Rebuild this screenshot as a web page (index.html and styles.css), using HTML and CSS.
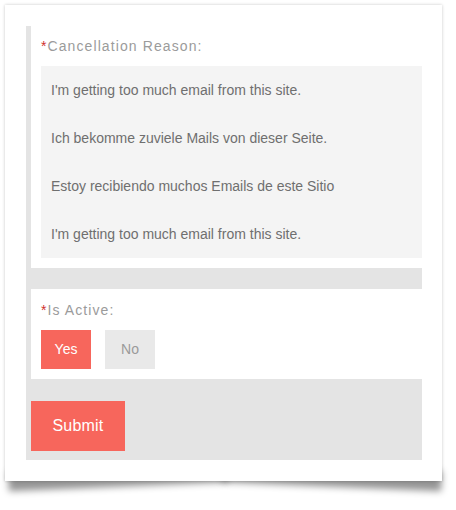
FILE: index.html
```html
<!DOCTYPE html>
<html>
<head>
<meta charset="utf-8">
<link rel="stylesheet" href="styles.css">
</head>
<body>
<div class="card">
  <div class="form">
    <div class="panel">
      <div class="label"><span class="req">*</span>Cancellation Reason:</div>
      <ul class="options">
        <li>I'm getting too much email from this site.</li>
        <li>Ich bekomme zuviele Mails von dieser Seite.</li>
        <li>Estoy recibiendo muchos Emails de este Sitio</li>
        <li>I'm getting too much email from this site.</li>
      </ul>
    </div>
    <div class="panel panel-active">
      <div class="label"><span class="req">*</span>Is Active:</div>
      <div class="toggle">
        <span class="btn btn-on">Yes</span>
        <span class="btn btn-off">No</span>
      </div>
    </div>
    <div class="actions">
      <span class="submit">Submit</span>
    </div>
  </div>
</div>
</body>
</html>
```

FILE: styles.css
```css
html {
  margin: 0;
  padding: 0;
  background: #ffffff;
}
body {
  margin: 0;
  padding: 0;
  font-family: "Liberation Sans", Arial, Helvetica, sans-serif;
  width: 456px;
  height: 510px;
  overflow: hidden;
}
.card {
  position: relative;
  margin: 5px 0 0 5px;
  width: 437px;
  height: 476px;
  box-sizing: border-box;
  padding: 21px 20px 0 21px;
  background: #ffffff;
  box-shadow: 0 0 3px rgba(0, 0, 0, 0.22);
}
.card::before,
.card::after {
  content: "";
  position: absolute;
  z-index: -1;
  bottom: 16px;
  width: 50%;
  height: 20px;
  box-shadow: 0 17px 7px rgba(0, 0, 0, 0.42);
}
.card::before {
  left: 3px;
  transform: rotate(-2.4deg);
  transform-origin: right bottom;
}
.card::after {
  right: 1px;
  transform: rotate(2.4deg);
  transform-origin: left bottom;
}
.form {
  display: flex;
  flex-direction: column;
  gap: 21px;
  background: #e4e4e4;
  padding-left: 5px;
  height: 434px;
  box-sizing: border-box;
}
.panel {
  background: #ffffff;
  padding: 10px 0 10px 10px;
}
.panel-active {
  padding-top: 11px;
}
.label {
  font-size: 14px;
  line-height: 20px;
  color: #9b9b9b;
  letter-spacing: 1.1px;
  margin-bottom: 10px;
}
.req {
  color: #d0312d;
  letter-spacing: 0;
  margin-right: 1px;
}
.options {
  list-style: none;
  margin: 0;
  padding: 0;
  background: #f4f4f4;
}
.options li {
  height: 48px;
  line-height: 48px;
  padding-left: 10px;
  font-size: 14px;
  color: #6f6f6f;
}
.toggle {
  display: flex;
  gap: 14px;
}
.btn {
  width: 50px;
  height: 39px;
  line-height: 39px;
  text-align: center;
  font-size: 14px;
}
.btn-on {
  background: #f7665c;
  color: #ffffff;
}
.btn-off {
  background: #e9e9e9;
  color: #9a9a9a;
}
.actions {
  margin-top: 1px;
}
.submit {
  display: block;
  width: 94px;
  height: 50px;
  line-height: 50px;
  text-align: center;
  background: #f7665c;
  color: #ffffff;
  font-size: 16px;
  letter-spacing: 0.2px;
}
```
